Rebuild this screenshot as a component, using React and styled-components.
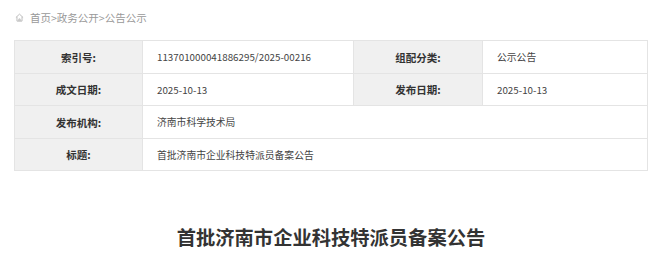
import React from "react";
import styled, { createGlobalStyle } from "styled-components";

const Global = createGlobalStyle`
  html, body { margin: 0; padding: 0; background: #fff; }
  body { font-family: "Noto Sans CJK SC", "Noto Sans", sans-serif; color: #333; }
`;

const Page = styled.div`
  width: 634px;
  margin: 0 auto;
`;

const Crumbs = styled.div`
  display: flex;
  align-items: center;
  gap: 6px;
  height: 35px;
  padding-left: 1px;
  padding-bottom: 1px;
  box-sizing: border-box;
  font-size: 10.5px;
  color: #999;
`;

const CrumbText = styled.span`
  letter-spacing: 0;
`;

const Info = styled.div`
  display: grid;
  grid-template-columns: 128px 211px 129px 165px;
  grid-template-rows: 33px 32px 33px 32px;
  border-top: 1px solid #e4e4e4;
  border-left: 1px solid #e4e4e4;
  margin-top: 5px;
`;

const Cell = styled.div`
  display: flex;
  align-items: center;
  border-right: 1px solid #e4e4e4;
  border-bottom: 1px solid #e4e4e4;
  font-size: ${(p) => (p.$label ? "10.5px" : "9.8px")};
  font-weight: ${(p) => (p.$label ? 700 : 400)};
  background: ${(p) => (p.$label ? "#f0f0f0" : "#fff")};
  color: ${(p) => (p.$label ? "#333" : "#444")};
  justify-content: ${(p) => (p.$label ? "center" : "flex-start")};
  padding-left: ${(p) => (p.$label ? "0" : "14px")};
  grid-column: ${(p) => (p.$wide ? "span 3" : "auto")};
  white-space: nowrap;
`;

const Title = styled.h1`
  margin: 52px 0 0;
  text-align: center;
  font-size: 19.3px;
  font-weight: 700;
  color: #333;
  line-height: 28px;
`;

const HomeIcon = () => (
  <svg width="9" height="9" viewBox="0 0 10 10" fill="none" stroke="#b0b0b0" strokeWidth="0.9">
    <path d="M1 5 L5 1.3 L9 5" />
    <path d="M2.2 4.2 V9 H7.8 V4.2" />
    <path d="M4.3 9 V6.6 H5.7 V9" />
  </svg>
);

const rows = [
  [["索引号:", "113701000041886295/2025-00216"], ["组配分类:", "公示公告"]],
  [["成文日期:", "2025-10-13"], ["发布日期:", "2025-10-13"]],
  [["发布机构:", "济南市科学技术局"]],
  [["标题:", "首批济南市企业科技特派员备案公告"]],
];

export default function App() {
  return (
    <Page>
      <Global />
      <Crumbs>
        <HomeIcon />
        <CrumbText>首页&gt;政务公开&gt;公告公示</CrumbText>
      </Crumbs>
      <Info>
        {rows.map((row, i) =>
          row.map(([label, value], j) => (
            <React.Fragment key={`${i}-${j}`}>
              <Cell $label>{label}</Cell>
              <Cell $wide={row.length === 1}>{value}</Cell>
            </React.Fragment>
          ))
        )}
      </Info>
      <Title>首批济南市企业科技特派员备案公告</Title>
    </Page>
  );
}
